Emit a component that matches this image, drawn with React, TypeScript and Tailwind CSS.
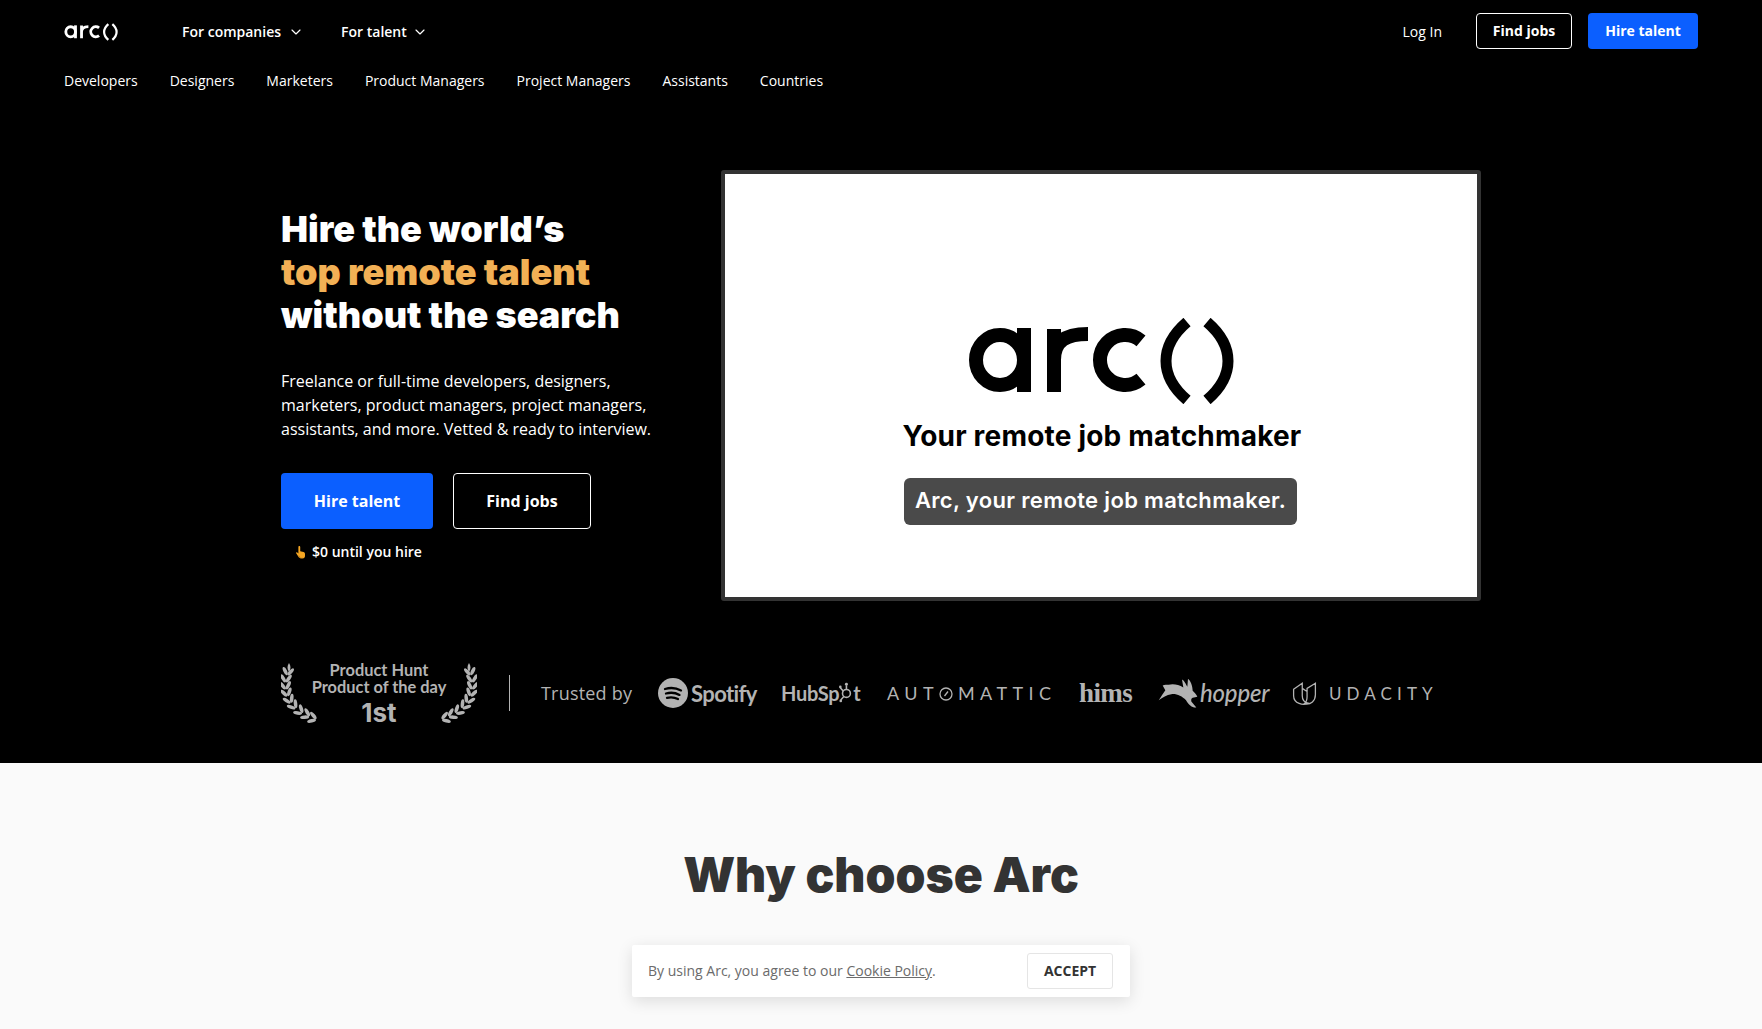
import React from "react";
import { ChevronDown } from "lucide-react";

function ArcLogo({ className, color }: { className: string; color: string }) {
  return (
    <svg viewBox="0 0 268 86" className={className} fill="none" stroke={color}>
      <ellipse cx="33" cy="42" rx="24" ry="25" strokeWidth="14" />
      <path d="M57 10V74" strokeWidth="14" />
      <path d="M87 11V74M87 42C87 22 100 16 121 16" strokeWidth="14" />
      <path d="M174 22.800A25 25 0 1 0 174 61.200" strokeWidth="14" />
      <path d="M220 4C192 28 192 58 220 82" strokeWidth="11" />
      <path d="M240 4C268 28 268 58 240 82" strokeWidth="11" />
    </svg>
  );
}

function Laurel({ flip }: { flip?: boolean }) {
  const pairs = [
    [7, 8, 8], [5, 15, 2], [4.500, 22, -6], [5.500, 29, -14], [8, 36, -26], [12, 42, -38], [18, 47.500, -50], [24.500, 51.500, -62], [31, 55, -72],
  ];
  return (
    <svg viewBox="0 0 38 60" className={flip ? "w-[38px] h-[60px] shrink-0 -scale-x-100" : "w-[38px] h-[60px] shrink-0"} fill="#b3b3b3">
      <path d="M8 0C10 3 10 6 8 9 6 6 6 3 8 0z" />
      {pairs.map(([x, y, r], i) => (
        <g key={i} transform={`translate(${x} ${y}) rotate(${r})`}>
          <ellipse cx="-2.800" cy="0.500" rx="1.800" ry="4.500" transform="rotate(-32 -2.800 0.500)" />
          <ellipse cx="2.800" cy="0.500" rx="1.800" ry="4.500" transform="rotate(32 2.800 0.500)" />
        </g>
      ))}
    </svg>
  );
}

function Hand() {
  return (
    <svg viewBox="0 0 12 16" className="w-[11px] h-[15px]">
      <path d="M4 1.200c.8-.6 1.700 0 1.700.9v4.400l3.600 1c1 .3 1.600 1 1.600 2v2.200c0 1.400-1.100 2.600-2.600 2.600H6.200c-1 0-1.800-.5-2.300-1.300L1.300 8.900c-.4-.7.5-1.500 1.200-.9l1.200 1.100V2.100c0-.4.100-.7.300-.9z" fill="#f5a623" />
      <path d="M4 11.500l2 2.800h3" stroke="#a86a10" strokeWidth="0.7" fill="none" />
    </svg>
  );
}

const subNav = ["Developers", "Designers", "Marketers", "Product Managers", "Project Managers", "Assistants", "Countries"];

export default function App() {
  return (
    <div className="relative h-[1029px] overflow-hidden bg-[#fafafa] font-['Open_Sans',sans-serif]">
      <section className="bg-black h-[763px] text-white">
        <header className="px-16">
          <div className="flex h-[64px] items-center">
            <ArcLogo className="w-[54px] h-[18px] mr-[64px]" color="#ffffff" />
            <button className="flex items-center text-sm font-semibold mr-[37px]">
              For companies
              <ChevronDown className="w-[16px] h-[16px] ml-[7px]" strokeWidth={1.75} />
            </button>
            <button className="flex items-center text-sm font-semibold">
              For talent
              <ChevronDown className="w-[16px] h-[16px] ml-[5px]" strokeWidth={1.75} />
            </button>
            <div className="ml-auto flex items-center">
              <span className="text-sm mr-[34px] font-medium">Log In</span>
              <button className="w-[96px] h-[36px] -translate-y-px rounded-[4px] border border-white text-sm font-bold mr-4">Find jobs</button>
              <button className="w-[110px] h-[36px] -translate-y-px rounded-[4px] bg-[#0b5fff] text-sm font-bold">Hire talent</button>
            </div>
          </div>
          <nav className="flex gap-8 text-sm h-[34px] items-center">
            {subNav.map((n) => (
              <span key={n}>{n}</span>
            ))}
          </nav>
        </header>

        <div className="w-[1200px] mx-auto pt-[72px]">
          <div className="flex justify-between">
            <div className="w-[400px] pt-[38px]">
              <h1 className="font-['Inter',sans-serif] font-black text-[36px] leading-[43px] whitespace-nowrap">
                Hire the world’s
                <br />
                <span className="text-[#f2b055]">top remote talent</span>
                <br />
                without the search
              </h1>
              <p className="mt-[32px] text-base leading-6 whitespace-nowrap">
                Freelance or full-time developers, designers,
                <br />
                marketers, product managers, project managers,
                <br />
                assistants, and more. Vetted &amp; ready to interview.
              </p>
              <div className="flex gap-5 mt-[32px]">
                <button className="w-[152px] h-[56px] rounded-[4px] bg-[#0b5fff] text-base font-bold">Hire talent</button>
                <button className="w-[138px] h-[56px] rounded-[4px] border border-white text-base font-bold">Find jobs</button>
              </div>
              <div className="flex items-center gap-[6px] mt-[13px] ml-[14px] text-sm font-semibold">
                <Hand />
                <span>$0 until you hire</span>
              </div>
            </div>

            <div className="w-[760px] h-[431px] border-4 border-[#333333] rounded-[3px] bg-white flex flex-col items-center text-black">
              <ArcLogo className="w-[268px] h-[86px] mt-[144px]" color="#000000" />
              <div className="font-['Inter',sans-serif] font-bold text-[28px] leading-[34px] mt-[15px] ml-[2px] tracking-[0.2px]">Your remote job matchmaker</div>
              <div className="mr-px mt-[25px] w-[393px] h-[47px] rounded-[6px] bg-[#4a4a4a] text-white flex items-center justify-center font-['Inter',sans-serif] font-semibold text-[22px] tracking-[0.35px] whitespace-nowrap pb-[2px]">
                Arc, your remote job matchmaker.
              </div>
            </div>
          </div>

          <div className="flex items-center mt-[62px] h-[60px] text-[#b3b3b3]">
            <div className="flex items-center w-[196px] justify-between">
              <Laurel />
              <div className="-mx-[8px] text-center font-['Lato',sans-serif] font-bold text-[16.4px] leading-[17px] whitespace-nowrap pt-[2px]">
                <div>Product Hunt</div>
                <div>Product of the day</div>
                <div className="font-['Inter',sans-serif] text-[26px] leading-[30px] font-bold mt-[3px]">1st</div>
              </div>
              <Laurel flip />
            </div>
            <div className="w-px h-[36px] bg-[#b3b3b3] ml-[32px]" />
            <span className="ml-[31px] text-lg tracking-[0.2px] w-[117px] whitespace-nowrap">Trusted by</span>

            <svg viewBox="0 0 30 30" className="w-[30px] h-[30px] mr-[3px]">
              <circle cx="15" cy="15" r="15" fill="#b3b3b3" />
              <path d="M7 11c5-1.500 11-1.200 16 1.400M8 15.500c4.500-1.200 9.500-.8 13.500 1.400M9 19.800c3.800-.9 7.500-.6 11 1.200" stroke="#000" strokeWidth="2.300" strokeLinecap="round" fill="none" />
            </svg>
            <span className="font-['Lato',sans-serif] font-bold text-[22px] w-[67px] tracking-[-0.6px]">Spotify</span>

            <span className="ml-[23px] w-[81px] flex items-center font-['Lato',sans-serif] font-bold text-[20px] tracking-[-0.3px] whitespace-nowrap">
              <span>HubSp</span>
              <svg viewBox="0 0 16 26" className="w-[14px] h-[24px] shrink-0">
                <g fill="none" stroke="#b3b3b3" strokeWidth="1.800">
                  <circle cx="8.500" cy="13.500" r="4.500" />
                  <path d="M8.500 9V4M5 11 1.500 7M5.500 17 2 21" />
                </g>
                <circle cx="8.500" cy="3" r="1.700" fill="#b3b3b3" />
                <circle cx="1.500" cy="6" r="1.500" fill="#b3b3b3" />
                <circle cx="2" cy="22" r="1.500" fill="#b3b3b3" />
              </svg>
              <span>t</span>
            </span>

            <span className="ml-[25px] w-[168px] flex items-center pt-px font-['Lato',sans-serif] text-[18px] tracking-[5.400px] whitespace-nowrap">
              <span>AUT</span>
              <svg viewBox="0 0 14 14" className="w-[14px] h-[14px] shrink-0 mr-[5px]" fill="none" stroke="#b3b3b3" strokeWidth="1.300">
                <circle cx="7" cy="7" r="6" />
                <path d="M5.500 9 9 4.500" />
              </svg>
              <span>MATTIC</span>
            </span>

            <span className="ml-[24px] w-[55px] font-['Liberation_Serif',serif] font-bold text-[27px] tracking-[-0.6px]">hims</span>

            <svg viewBox="20 26 120 92" className="ml-[24px] w-[40px] h-[31px]" fill="#b3b3b3">
              <path d="M22 92C30 80 36 70 42 62L34 48C40 44 46 46 52 46C66 42 82 46 96 54L92 30C98 32 104 44 108 52L110 28C118 34 124 50 124 64C130 70 136 76 138 82L128 84C122 84 118 88 120 96L135 114C124 116 112 106 104 92C92 80 76 72 60 74C46 76 34 84 22 92Z" />
            </svg>
            <span className="ml-[2px] w-[70px] font-['Lato',sans-serif] italic font-medium text-[24px] whitespace-nowrap tracking-[-0.2px]">hopper</span>

            <svg viewBox="430 30 78 76" className="ml-[22px] w-[25px] h-[25px]" fill="none" stroke="#b3b3b3" strokeWidth="4">
              <path d="M435 55L462 36V75C462 88 470 96 480 98C466 106 435 100 435 75ZM503 36L477 52V78C477 88 474 96 468 100C490 104 503 90 503 72ZM462 52L477 62" />
            </svg>
            <span className="ml-[12px] pt-px font-['Lato',sans-serif] text-[17px] tracking-[5.100px] whitespace-nowrap">UDACITY</span>
          </div>
        </div>
      </section>

      <h2 className="text-center font-['Inter',sans-serif] font-black text-[48px] leading-[58px] text-[#333333] mt-[83px]">Why choose Arc</h2>

      <div className="absolute left-[632px] top-[945px] w-[498px] h-[52px] bg-white rounded-[2px] shadow-[0_4px_16px_rgba(0,0,0,0.12)] flex items-center justify-between pl-4 pr-[17px]">
        <span className="text-sm text-[#6b6b6b]">
          By using Arc, you agree to our <span className="underline">Cookie Policy</span>.
        </span>
        <button className="w-[86px] h-[36px] rounded-[3px] border border-[#e5e5e5] text-sm font-bold text-[#333333]">ACCEPT</button>
      </div>
    </div>
  );
}
